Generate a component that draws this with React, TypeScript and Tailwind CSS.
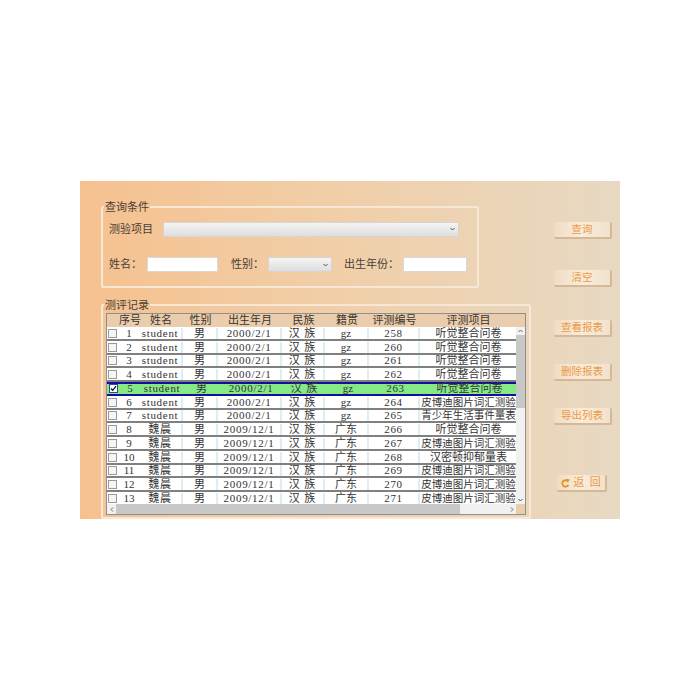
const font = "font-['Liberation_Serif','Noto_Sans_CJK_SC',serif]"
const cols = "grid-cols-[12px_20px_44px_35px_64px_43px_44px_51px_97px]"

const rows = [
  ["1", "student", "2000/2/1", "gz", "258", "听觉整合问卷"],
  ["2", "student", "2000/2/1", "gz", "260", "听觉整合问卷"],
  ["3", "student", "2000/2/1", "gz", "261", "听觉整合问卷"],
  ["4", "student", "2000/2/1", "gz", "262", "听觉整合问卷"],
  ["5", "student", "2000/2/1", "gz", "263", "听觉整合问卷"],
  ["6", "student", "2000/2/1", "gz", "264", "皮博迪图片词汇测验"],
  ["7", "student", "2000/2/1", "gz", "265", "青少年生活事件量表"],
  ["8", "魏晨", "2009/12/1", "广东", "266", "听觉整合问卷"],
  ["9", "魏晨", "2009/12/1", "广东", "267", "皮博迪图片词汇测验"],
  ["10", "魏晨", "2009/12/1", "广东", "268", "汉密顿抑郁量表"],
  ["11", "魏晨", "2009/12/1", "广东", "269", "皮博迪图片词汇测验"],
  ["12", "魏晨", "2009/12/1", "广东", "270", "皮博迪图片词汇测验"],
  ["13", "魏晨", "2009/12/1", "广东", "271", "皮博迪图片词汇测验"],
]

const headers = ["序号", "姓名", "性别", "出生年月", "民族", "籍贯", "评测编号", "评测项目"]

function Chevron() {
  return (
    <svg width="5" height="4" viewBox="0 0 5 4" fill="none" stroke="#555" strokeWidth="1">
      <path d="M0.5 1l2 2 2-2" />
    </svg>
  )
}

function Select({ className }: { className: string }) {
  return (
    <div className={`h-[15px] flex items-center justify-end pr-[3px] rounded-[1px] border border-[#d8d4cf] bg-gradient-to-b from-[#f4f4f4] to-[#dedede] ${className}`}>
      <Chevron />
    </div>
  )
}

function ActionButton({ label, className }: { label: string; className: string }) {
  return (
    <button className={`w-[58px] h-[17px] rounded-[2px] bg-gradient-to-r from-[#f0dcc4] via-[#f8ecdc] to-[#f2e2cc] border-r-2 border-b-2 border-[#d4b898] text-[10.5px] leading-[15px] text-center text-[#ec9a44] ${className}`}>
      {label}
    </button>
  )
}

function Row({ row, selected }: { row: string[]; selected: boolean }) {
  const base = "flex items-center justify-center whitespace-nowrap"
  const c = selected ? base : `${base} border-r-2 border-[#dcedf4]`
  const latin = "tracking-[0.7px]"
  return (
    <div className={`grid ${cols} h-[13.75px] box-border text-[11px] text-[#333333] ${selected ? "pl-[1px] leading-[9.75px] bg-[#86e986] border-y-2 border-[#10109a]" : "pt-[0.75px] leading-[11px] bg-white border-b-2 border-[#808080]"}`}>
      <div className="flex items-center justify-start">
        {selected ? (
          <span className="ml-[1px] w-[9px] h-[9px] border border-[#2a4a9a] bg-white flex items-center justify-center">
            <svg width="7" height="7" viewBox="0 0 7 7" fill="none" stroke="#111" strokeWidth="1.3">
              <path d="M1 3.5l1.7 1.8L6 1.2" />
            </svg>
          </span>
        ) : (
          <span className="ml-[1px] w-[9px] h-[9px] border border-[#9a9a9a] bg-[#f6f6f6]" />
        )}
      </div>
      <div className={base}>{row[0]}</div>
      <div className={`${c} ${latin}`}>{row[1]}</div>
      <div className={c}>男</div>
      <div className={`${c} ${latin}`}>{row[2]}</div>
      <div className={`${c} tracking-[1px]`}>汉 族</div>
      <div className={c}>{row[3]}</div>
      <div className={`${c} ${latin}`}>{row[4]}</div>
      <div className={`${base} ${row[5].length > 8 ? "text-[10.5px]" : ""}`}>{row[5]}</div>
    </div>
  )
}

export default function App() {
  return (
    <div className="w-[700px] h-[700px] bg-white pt-[181px] pl-[80px]">
      <div className={`w-[540px] h-[338px] flex overflow-hidden bg-gradient-to-r from-[#f6c18f] via-[#f0cfa9] to-[#e8d9c3] text-[11px] text-[#4a4036] ${font}`}>
        {/* left side */}
        <div className="w-[474px] shrink-0 pl-[21px] pt-[19px]">
          <fieldset className="w-[378px] h-[88px] border-2 border-[#f6e7d6] rounded-[2px]">
            <legend className="ml-[1px] px-[1px] leading-[14px]">查询条件</legend>
            <div className="flex items-center pl-[6px] pt-[7px] h-[23px]">
              <span className="w-[54px]">测验项目</span>
              <Select className="w-[296px]" />
            </div>
            <div className="flex items-center pl-[6px] mt-[20px] h-[15px]">
              <span className="w-[38px]">姓名：</span>
              <div className="w-[71px] h-[15px] bg-white border border-[#ddd8d2]" />
              <span className="ml-[13px] w-[37px]">性别：</span>
              <Select className="w-[64px]" />
              <span className="ml-[12px] w-[59px]">出生年份：</span>
              <div className="w-[64px] h-[15px] bg-white border border-[#ddd8d2]" />
            </div>
          </fieldset>

          <fieldset className="w-[430px] h-[221px] mt-[10px] border-2 border-[#f6e7d6] rounded-[2px]">
            <legend className="ml-[1px] px-[1px] leading-[14px]">测评记录</legend>
            <div className="ml-[3px] mt-[1px] w-[420px] h-[202px] border border-[#8f8f8f] flex flex-col overflow-hidden">
              <div className="flex flex-1 min-h-0">
                <div className="w-[409px] shrink-0 overflow-hidden">
                  <div className={`grid ${cols} h-[13px] bg-[#e9cdad] leading-[13px] text-center text-[#3c342c] whitespace-nowrap`}>
                    <div />
                    {headers.map((h) => (
                      <div key={h}>{h}</div>
                    ))}
                  </div>
                  {rows.map((r) => (
                    <Row key={r[0]} row={r} selected={r[0] === "5"} />
                  ))}
                </div>
                <div className="flex-1 flex flex-col">
                  <div className="h-[13px] bg-[#e9cdad]" />
                  <div className="flex-1 flex flex-col bg-[#f1f1f1]">
                    <div className="h-[8px] flex items-center justify-center">
                      <svg width="5" height="4" viewBox="0 0 5 4" fill="none" stroke="#666" strokeWidth="1">
                        <path d="M0.5 3l2-2 2 2" />
                      </svg>
                    </div>
                    <div className="h-[73px] bg-[#c8c8c8]" />
                    <div className="flex-1" />
                    <div className="h-[8px] flex items-center justify-center">
                      <Chevron />
                    </div>
                  </div>
                </div>
              </div>
              <div className="h-[10px] flex shrink-0">
                <div className="w-[409px] flex bg-[#f1f1f1]">
                  <div className="w-[9px] flex items-center justify-center">
                    <svg width="4" height="5" viewBox="0 0 4 5" fill="none" stroke="#666" strokeWidth="1">
                      <path d="M3 0.5l-2 2 2 2" />
                    </svg>
                  </div>
                  <div className="w-[344px] bg-[#c8c8c8]" />
                  <div className="flex-1 flex items-center justify-end pr-[2px]">
                    <svg width="4" height="5" viewBox="0 0 4 5" fill="none" stroke="#666" strokeWidth="1">
                      <path d="M1 0.5l2 2-2 2" />
                    </svg>
                  </div>
                </div>
                <div className="flex-1 bg-[#e9cdad]" />
              </div>
            </div>
          </fieldset>
        </div>

        {/* right side buttons */}
        <div className="flex flex-col items-start pt-[41px]">
          <ActionButton label="查询" className="" />
          <ActionButton label="清空" className="mt-[31px]" />
          <ActionButton label="查看报表" className="mt-[33px]" />
          <ActionButton label="删除报表" className="mt-[27px]" />
          <ActionButton label="导出列表" className="mt-[27px]" />
          <button className="ml-[3px] mt-[50px] w-[50px] h-[17px] flex items-center justify-center gap-[3px] rounded-[2px] bg-gradient-to-r from-[#f0dcc4] via-[#f8ecdc] to-[#f2e2cc] border-r-2 border-b-2 border-[#d4b898] text-[11px] leading-[15px] text-[#ec9a44]">
            <svg width="9" height="10" viewBox="0 0 9 10" fill="none">
              <path d="M6.8 3.2A3.2 3.2 0 1 0 7.4 6.8" stroke="#e8901c" strokeWidth="1.8" />
              <path d="M5 0.8L8.8 1.6L6.8 4.8Z" fill="#e8901c" />
            </svg>
            <span className="whitespace-pre">返  回</span>
          </button>
        </div>
      </div>
    </div>
  )
}
